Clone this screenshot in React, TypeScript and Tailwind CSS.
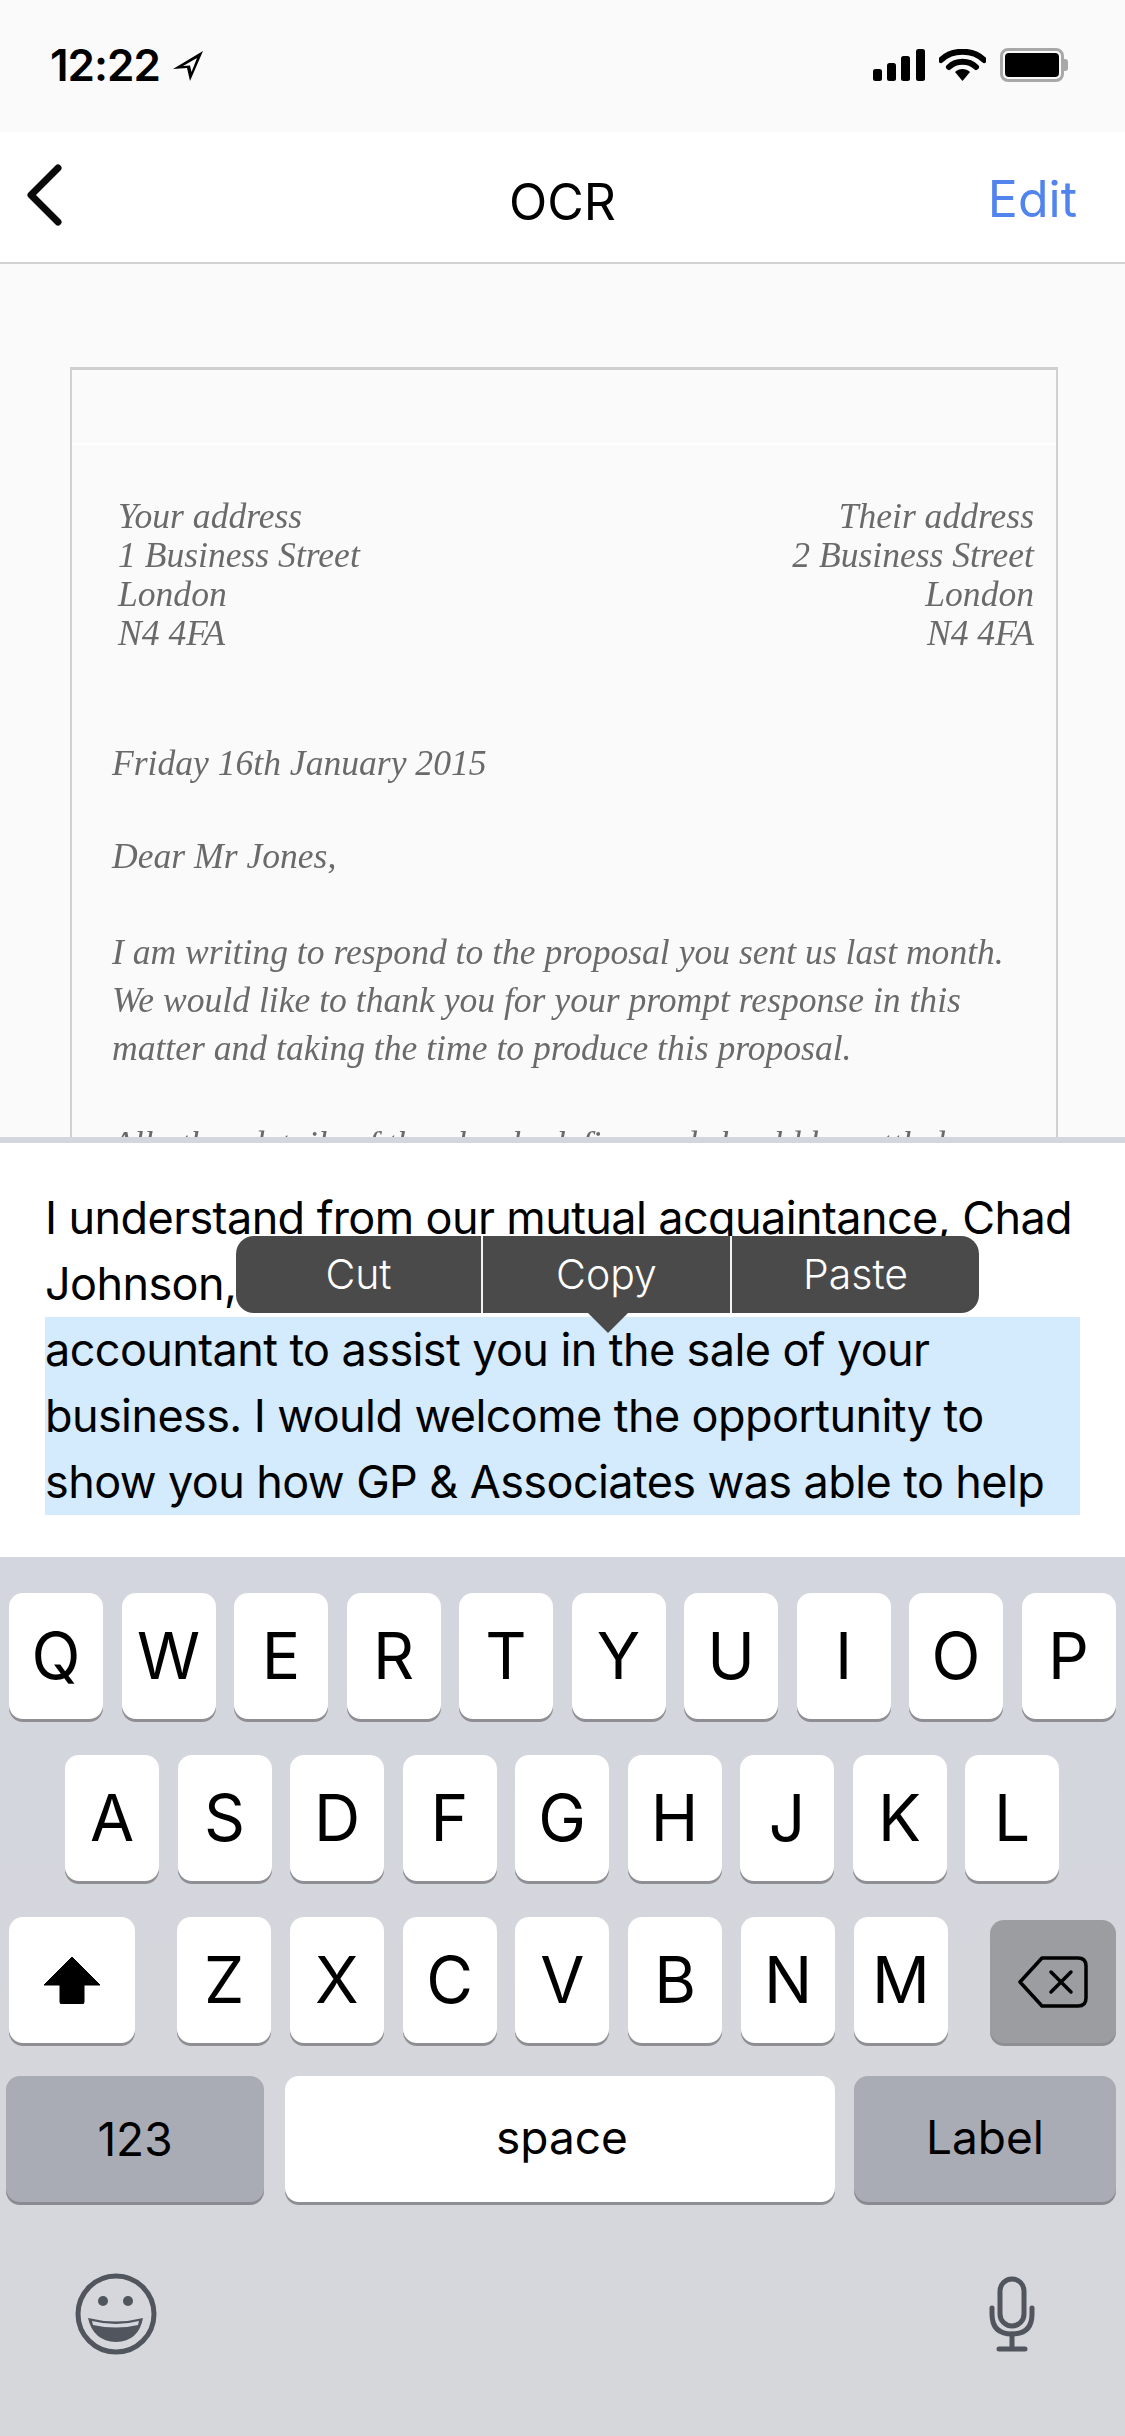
const ROW_1 = ["Q", "W", "E", "R", "T", "Y", "U", "I", "O", "P"];
const ROW_2 = ["A", "S", "D", "F", "G", "H", "J", "K", "L"];
const ROW_3 = ["Z", "X", "C", "V", "B", "N", "M"];

function Key({ label }: { label: string }) {
  return (
    <div className="flex h-[126px] w-[94px] shrink-0 items-center justify-center rounded-[14px] bg-white text-[64px] font-normal text-black shadow-[0_3px_0_#8e8e93]">
      {label}
    </div>
  );
}

function StatusBar() {
  return (
    <div className="flex h-[132px] shrink-0 items-start justify-between bg-[#fafafa] pl-[50px] pr-[57px] pt-[42px]">
      <div className="flex items-center gap-[12px]">
        <span className="text-[44px] font-semibold leading-[46px] tracking-[-1px] text-black">12:22</span>
        <svg width="32" height="32" viewBox="0 0 32 32" className="mt-[2px]">
          <path d="M31 1 L1 19 L15 18 L18 31 Z M25 8 L11 16 L18 15.5 L19.5 22 Z" fill="#000" fillRule="evenodd" />
        </svg>
      </div>
      <div className="mt-[6px] flex items-center gap-[14px]">
        <svg width="52" height="32" viewBox="0 0 52 32">
          <rect x="0" y="20" width="9" height="12" rx="2.5" fill="#000" />
          <rect x="14" y="14" width="9" height="18" rx="2.5" fill="#000" />
          <rect x="28" y="7" width="9" height="25" rx="2.5" fill="#000" />
          <rect x="43" y="0" width="9" height="32" rx="2.5" fill="#000" />
        </svg>
        <svg width="47" height="32" viewBox="0 0 47 32">
          <path d="M2 11 C13 0 34 0 45 11" fill="none" stroke="#000" strokeWidth="6" strokeLinecap="round" />
          <path d="M10 18 C17 11 30 11 37 18" fill="none" stroke="#000" strokeWidth="6" strokeLinecap="round" />
          <path d="M16 23 C20 19 27 19 31 23 L23.5 32 Z" fill="#000" />
        </svg>
        <div className="flex items-center">
          <div className="flex h-[34px] w-[64px] items-center justify-center rounded-[8px] border-[3px] border-[#a8a8a8] p-[2px]">
            <div className="h-full w-full rounded-[4px] bg-black" />
          </div>
          <div className="h-[12px] w-[4px] rounded-r-[3px] bg-[#a8a8a8]" />
        </div>
      </div>
    </div>
  );
}

function NavBar() {
  return (
    <div className="relative flex h-[132px] shrink-0 items-center justify-between border-b-[2px] border-[#d2d2d2] bg-white pl-[26px] pr-[48px]">
      <svg width="36" height="62" viewBox="0 0 36 62" className="-mt-[4px]">
        <path d="M32 4 L5 31 L32 58" fill="none" stroke="#0a0a0a" strokeWidth="7" strokeLinecap="round" strokeLinejoin="round" />
      </svg>
      <span className="absolute left-0 right-0 top-[33px] text-center text-[50px] font-normal text-black">OCR</span>
      <span className="mt-[4px] text-[50px] font-normal text-[#5284ee]">Edit</span>
    </div>
  );
}

function Letter() {
  return (
    <div className="flex-1 overflow-hidden bg-[#fafafa] pl-[70px] pr-[67px] pt-[103px]">
      <div className="h-full border-x-[2px] border-t-[3px] border-[#d0d0d0]">
        <div className="h-[75px] border-b-[2px] border-white" />
        <div className="blur-[0.7px] pl-[40px] pr-[22px] pt-[52px] font-['Liberation_Serif',serif] text-[35.6px] italic leading-[48px] text-[#6a6a6a]">
          <div className="ml-[6px] flex justify-between leading-[39px]">
            <div>
              <div>Your address</div>
              <div>1 Business Street</div>
              <div>London</div>
              <div>N4 4FA</div>
            </div>
            <div className="text-right">
              <div>Their address</div>
              <div>2 Business Street</div>
              <div>London</div>
              <div>N4 4FA</div>
            </div>
          </div>
          <div className="mt-[86px]">Friday 16th January 2015</div>
          <div className="mt-[45px]">Dear Mr Jones,</div>
          <div className="mt-[48px] whitespace-nowrap">
            <div>I am writing to respond to the proposal you sent us last month.</div>
            <div>We would like to thank you for your prompt response in this</div>
            <div>matter and taking the time to produce this proposal.</div>
          </div>
          <div className="mt-[48px] whitespace-nowrap">All other details of the plan look fine and should be settled</div>
        </div>
      </div>
    </div>
  );
}

function TextPanel() {
  return (
    <div className="relative h-[420px] shrink-0 border-t-[6px] border-[#d3d6de] bg-white px-[45px] pt-[42px] text-[45px] leading-[66px] tracking-[-0.6px] text-black">
      <div className="whitespace-nowrap">I understand from our mutual acquaintance, Chad</div>
      <div>Johnson,</div>
      <div className="whitespace-nowrap bg-[#d4eafd]">
        <div>accountant to assist you in the sale of your</div>
        <div>business. I would welcome the opportunity to</div>
        <div>show you how GP &amp; Associates was able to help</div>
      </div>

      {/* Edit menu */}
      <div className="absolute left-[236px] top-[93px] flex h-[77px] w-[743px] rounded-[18px] bg-[#4a4a4a] text-[41px] font-light leading-none tracking-normal text-white">
        <div className="flex w-[247px] items-center justify-center border-r-[2px] border-[#f2f2f2]">Cut</div>
        <div className="flex w-[249px] items-center justify-center border-r-[2px] border-[#f2f2f2]">Copy</div>
        <div className="flex flex-1 items-center justify-center">Paste</div>
        <div className="absolute left-[352px] top-full h-0 w-0 border-x-[20px] border-t-[20px] border-x-transparent border-t-[#4a4a4a]" />
      </div>
    </div>
  );
}

function Keyboard() {
  return (
    <div className="flex h-[879px] shrink-0 flex-col bg-linear-to-b from-[#d3d6de] to-[#d6d7db] pt-[36px]">
      <div className="flex gap-[18.5px] pl-[9px]">
        {ROW_1.map((k) => (
          <Key key={k} label={k} />
        ))}
      </div>
      <div className="mt-[36px] flex gap-[18.5px] pl-[65px]">
        {ROW_2.map((k) => (
          <Key key={k} label={k} />
        ))}
      </div>
      <div className="mt-[36px] flex items-end pl-[9px]">
        <div className="flex h-[126px] w-[126px] items-center justify-center rounded-[14px] bg-white shadow-[0_3px_0_#8e8e93]">
          <svg width="58" height="48" viewBox="0 0 58 48">
            <path d="M29 1 L57 29 L41 29 L41 46 Q41 48 39 48 L19 48 Q17 48 17 46 L17 29 L1 29 Z" fill="#000" stroke="#000" strokeLinejoin="round" />
          </svg>
        </div>
        <div className="ml-[42px] flex gap-[18.8px]">
          {ROW_3.map((k) => (
            <Key key={k} label={k} />
          ))}
        </div>
        <div className="ml-[42px] flex h-[123px] w-[126px] items-center justify-center rounded-[14px] bg-[#9c9da1] shadow-[0_3px_0_#8e8e93]">
          <svg width="70" height="52" viewBox="0 0 70 52" fill="none" stroke="#000" strokeWidth="3.5" strokeLinejoin="round" strokeLinecap="round">
            <path d="M2 26 L24 2 L60 2 Q68 2 68 10 L68 42 Q68 50 60 50 L24 50 Z" />
            <path d="M33 16 L53 36 M53 16 L33 36" />
          </svg>
        </div>
      </div>
      <div className="mt-[33px] flex px-[6px] text-[46px]">
        <div className="flex h-[126px] w-[258px] items-center justify-center rounded-[14px] bg-[#a9acb4] text-black shadow-[0_3px_0_#8a8b91]">123</div>
        <div className="ml-[21px] flex h-[126px] w-[550px] items-center justify-center rounded-[14px] bg-white pb-[4px] pl-[4px] text-black shadow-[0_3px_0_#8e8e93]">space</div>
        <div className="ml-[19px] flex h-[126px] w-[262px] items-center justify-center rounded-[14px] bg-[#a9acb4] pb-[4px] text-black shadow-[0_3px_0_#8a8b91]">Label</div>
      </div>
      <div className="mt-[71px] flex items-center justify-between pl-[75px] pr-[90px]">
        <svg width="82" height="82" viewBox="0 0 82 82">
          <circle cx="41" cy="41" r="38" fill="none" stroke="#51555d" strokeWidth="5" />
          <circle cx="28" cy="28" r="5" fill="#51555d" />
          <circle cx="53" cy="28" r="5" fill="#51555d" />
          <path d="M13 45 Q41 52 68 45 Q64 68 41 69 Q18 68 13 45 Z" fill="#51555d" />
          <path d="M17 48 Q41 54 64 48 L63 52 Q41 57 18 52 Z" fill="#d4d7de" />
        </svg>
        <svg width="46" height="76" viewBox="0 0 46 76" fill="none" stroke="#51555d" strokeWidth="5" strokeLinecap="round">
          <rect x="11" y="3" width="24" height="47" rx="12" />
          <path d="M3 32 L3 38 Q3 58 23 58 Q43 58 43 38 L43 32" />
          <path d="M23 58 L23 73 M10 73 L36 73" />
        </svg>
      </div>
    </div>
  );
}

export default function App() {
  return (
    <div className="flex h-[2436px] w-[1125px] flex-col overflow-hidden bg-white font-['Inter',sans-serif]">
      <StatusBar />
      <NavBar />
      <Letter />
      <TextPanel />
      <Keyboard />
    </div>
  );
}
